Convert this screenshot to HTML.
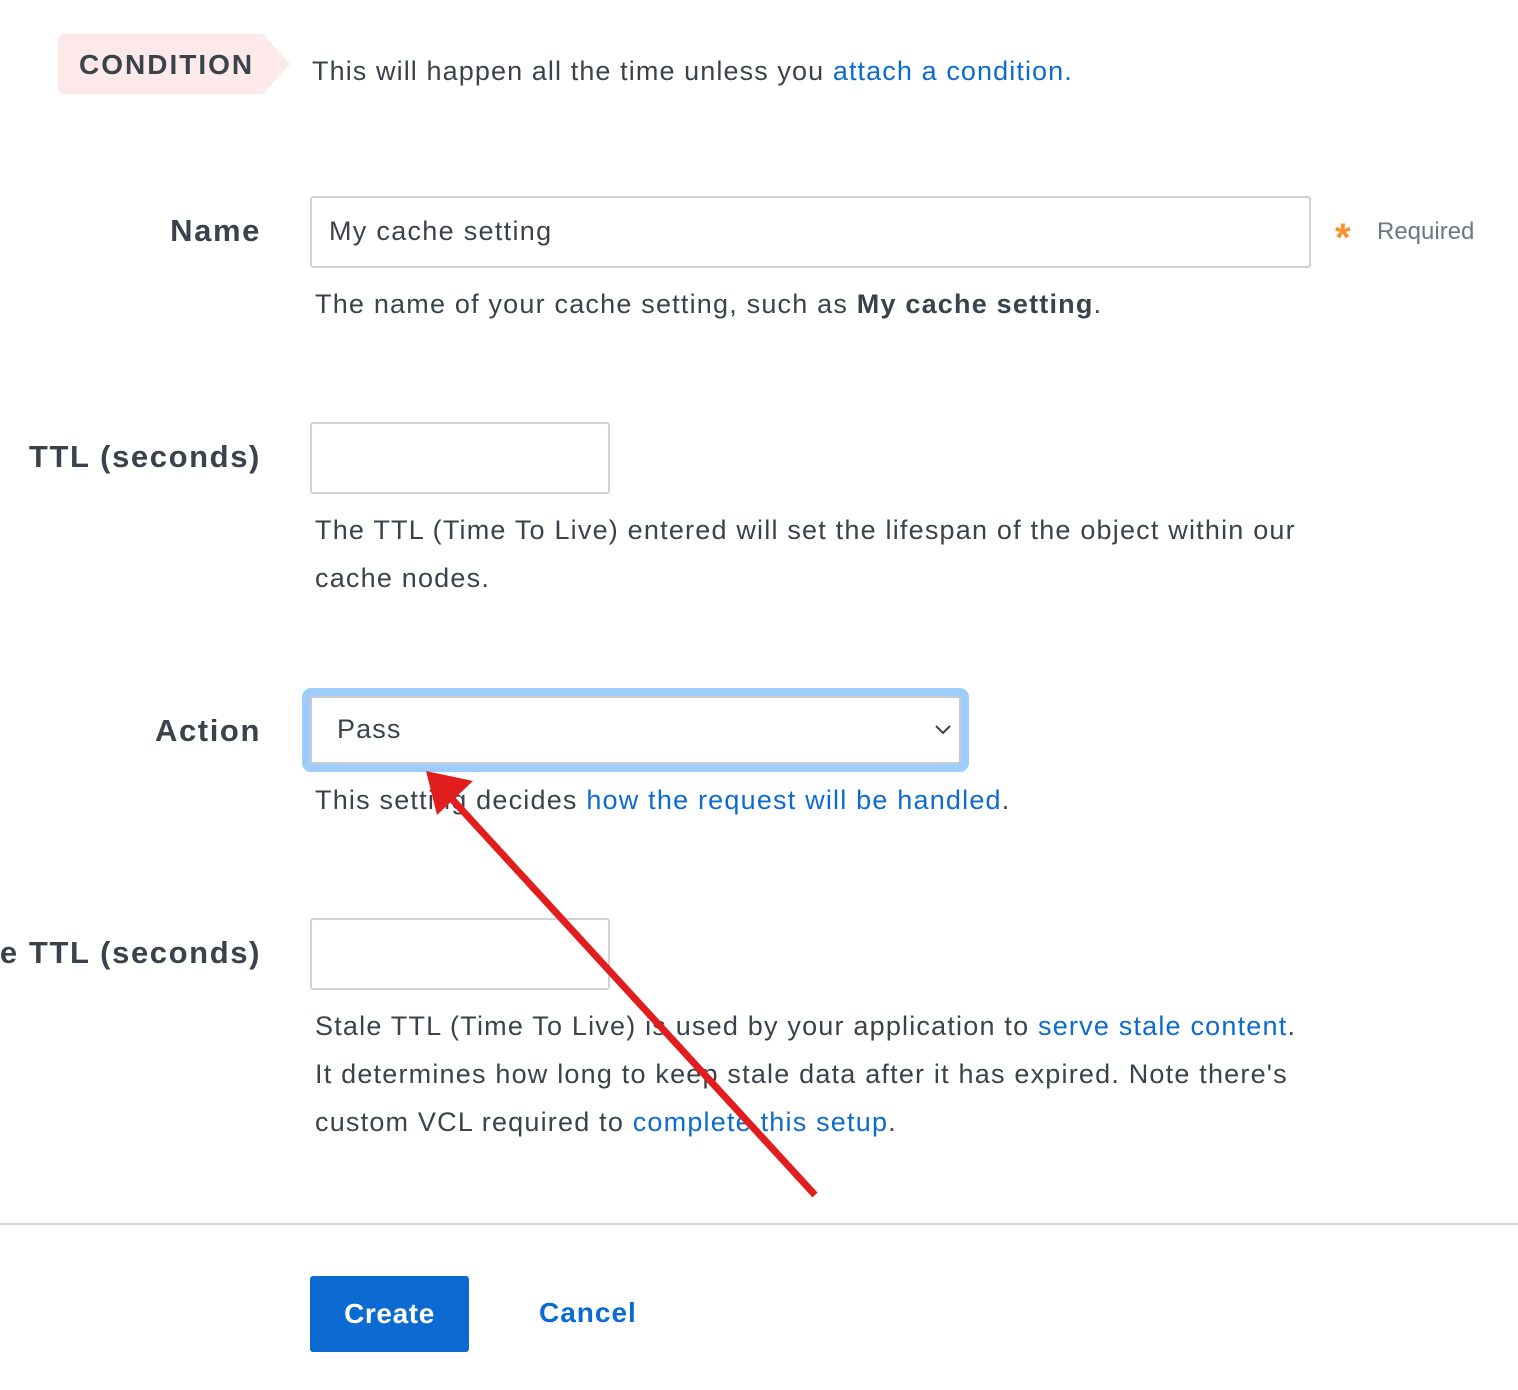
<!DOCTYPE html>
<html><head><meta charset="utf-8">
<style>
html,body{margin:0;padding:0;background:#fff;}
body{width:1518px;height:1390px;position:relative;overflow:hidden;font-family:"Liberation Sans",sans-serif;color:#3a434b;}
.abs{position:absolute;}
.tag{left:58px;top:34px;width:205px;height:60px;background:#fde9ea;border-radius:6px 0 0 6px;}
.tagtip{left:263px;top:34px;width:0;height:0;border-top:30px solid transparent;border-bottom:30px solid transparent;border-left:27px solid #fde9ea;}
.tagtxt{left:79px;top:49px;font-size:28px;font-weight:bold;letter-spacing:2px;color:#3a434b;}
.t{font-size:27px;white-space:nowrap;letter-spacing:1.1px;}
a{color:#0b6bd3;text-decoration:none;}
.lbl{font-size:31px;font-weight:bold;text-align:right;right:1257px;white-space:nowrap;color:#3a434b;letter-spacing:1.6px;}
.inp{border:2px solid #cfd3d6;border-radius:3px;box-sizing:border-box;background:#fff;}
.help{font-size:27px;line-height:48px;color:#3a434b;letter-spacing:1.2px;}
</style></head><body>
<div class="abs tag"></div><div class="abs tagtip"></div>
<div class="abs tagtxt">CONDITION</div>
<div class="abs t" style="left:312px;top:56px;">This will happen all the time unless you <a>attach a condition.</a></div>

<div class="abs lbl" style="top:213px;">Name</div>
<div class="abs inp" style="left:310px;top:196px;width:1001px;height:72px;"></div>
<div class="abs t" style="left:329px;top:216px;letter-spacing:1.3px;">My cache setting</div>
<div class="abs" style="left:1335px;top:216px;font-size:40px;color:#f7922e;font-weight:bold;">*</div>
<div class="abs" style="left:1377px;top:218px;font-size:24px;color:#6b7884;">Required</div>
<div class="abs help" style="left:315px;top:280px;white-space:nowrap;">The name of your cache setting, such as <b>My cache setting</b>.</div>

<div class="abs lbl" style="top:439px;">TTL (seconds)</div>
<div class="abs inp" style="left:310px;top:422px;width:300px;height:72px;"></div>
<div class="abs help" style="left:315px;top:506px;white-space:nowrap;">The TTL (Time To Live) entered will set the lifespan of the object within our<br>cache nodes.</div>

<div class="abs lbl" style="top:713px;">Action</div>
<div class="abs" style="left:302px;top:688px;width:667px;height:84px;background:#9ecdfb;border-radius:9px;"></div>
<div class="abs inp" style="left:310px;top:696px;width:651px;height:68px;border-color:#c8ccd0;"></div>
<div class="abs t" style="left:337px;top:714px;">Pass</div>
<svg class="abs" style="left:934px;top:722px;" width="18" height="14" viewBox="0 0 18 14"><path d="M2 4 L9 11 L16 4" fill="none" stroke="#3a434b" stroke-width="2"/></svg>
<div class="abs help" style="left:315px;top:776px;white-space:nowrap;">This setting decides <a>how the request will be handled</a>.</div>

<div class="abs lbl" style="top:935px;">Stale TTL (seconds)</div>
<div class="abs inp" style="left:310px;top:918px;width:300px;height:72px;"></div>
<div class="abs help" style="left:315px;top:1002px;white-space:nowrap;">Stale TTL (Time To Live) is used by your application to <a>serve stale content</a>.<br>It determines how long to keep stale data after it has expired. Note there's<br>custom VCL required to <a>complete this setup</a>.</div>

<div class="abs" style="left:0;top:1223px;width:1518px;height:2px;background:#d4d8db;"></div>
<div class="abs" style="left:310px;top:1276px;width:159px;height:76px;background:#0b6bd3;border-radius:3px;color:#fff;font-size:28px;font-weight:bold;text-align:center;line-height:76px;letter-spacing:0.6px;">Create</div>
<div class="abs" style="left:539px;top:1297px;font-size:28px;font-weight:bold;color:#0b6bd3;letter-spacing:1px;">Cancel</div>

<svg class="abs" style="left:0;top:0;" width="1518" height="1390">
<line x1="815" y1="1195" x2="450" y2="797" stroke="#e21d1d" stroke-width="7"/>
<polygon points="426,771 473,781 437,815" fill="#e21d1d"/>
</svg>
</body></html>
